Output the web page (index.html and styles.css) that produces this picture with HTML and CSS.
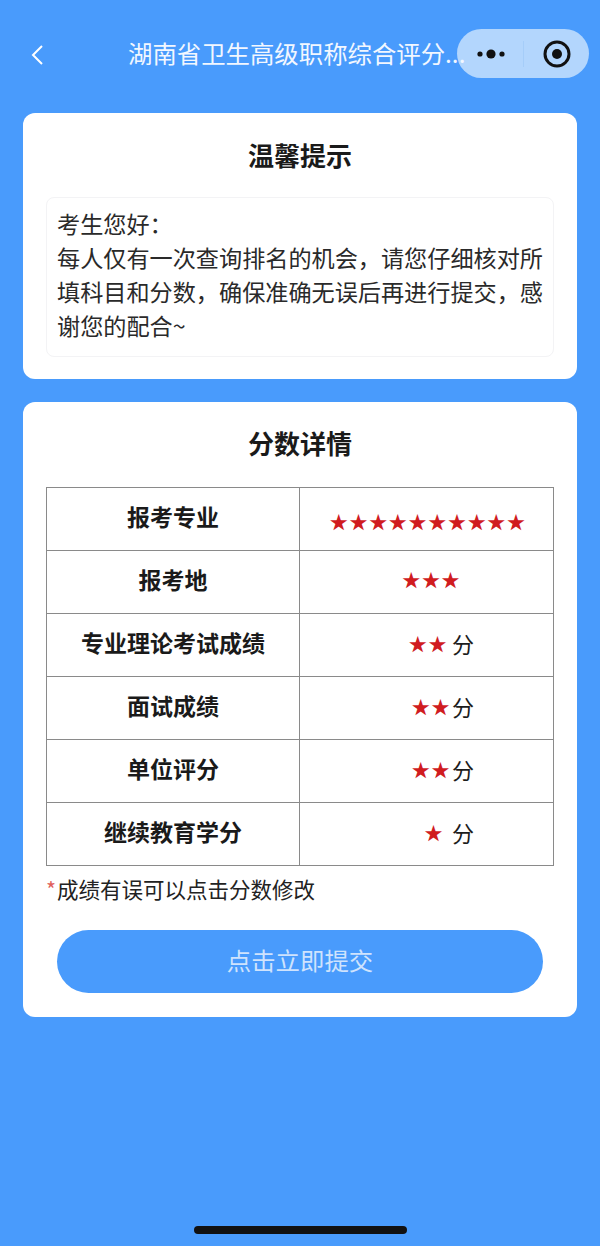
FILE: index.html
```html
<!DOCTYPE html>
<html lang="zh-CN">
<head>
    <meta charset="UTF-8">
    <title>分数详情</title>
    <link rel="stylesheet" href="styles.css">
</head>
<body>
    <header class="topbar">
        <svg class="back" width="14" height="22" viewBox="0 0 14 22">
            <path d="M12 2 L3 11 L12 20" fill="none" stroke="#fff" stroke-width="2"/>
        </svg>
        <div class="capsule">
            <svg class="dots" width="30" height="12" viewBox="0 0 30 12">
                <circle cx="4" cy="6" r="2.6" fill="#111"/>
                <circle cx="15" cy="6" r="4.6" fill="#111"/>
                <circle cx="26" cy="6" r="2.6" fill="#111"/>
            </svg>
            <span class="divider"></span>
            <svg class="target" width="28" height="28" viewBox="0 0 28 28">
                <circle cx="14" cy="14" r="12" fill="none" stroke="#111" stroke-width="3"/>
                <circle cx="14" cy="14" r="5" fill="#111"/>
            </svg>
        </div>
        <div class="title">湖南省卫生高级职称综合评分...</div>
    </header>

    <main class="content">
        <section class="card notice-card">
            <h2>温馨提示</h2>
            <div class="notice">
                考生您好&#xFF1A;<br>
                每人仅有一次查询排名的机会&#xFF0C;请您仔细核对所填科目和分数&#xFF0C;确保准确无误后再进行提交&#xFF0C;感谢您的配合~
            </div>
        </section>

        <section class="card score-card">
            <h2>分数详情</h2>
            <table class="scores">
                <tr>
                    <th>报考专业</th>
                    <td class="low"><span class="stars shift">★★★★★★★★★★</span></td>
                </tr>
                <tr>
                    <th>报考地</th>
                    <td class="mid"><span class="stars shift-far">★★★</span></td>
                </tr>
                <tr>
                    <th>专业理论考试成绩</th>
                    <td><div class="score"><span class="stars gap-m">★★</span>分</div></td>
                </tr>
                <tr>
                    <th>面试成绩</th>
                    <td><div class="score"><span class="stars gap-s">★★</span>分</div></td>
                </tr>
                <tr>
                    <th>单位评分</th>
                    <td><div class="score"><span class="stars gap-s">★★</span>分</div></td>
                </tr>
                <tr>
                    <th>继续教育学分</th>
                    <td><div class="score"><span class="stars gap-l">★</span>分</div></td>
                </tr>
            </table>
            <p class="tip"><span class="mark">*</span>成绩有误可以点击分数修改</p>
            <button class="submit" type="button">点击立即提交</button>
        </section>
    </main>

    <div class="home-bar"></div>
</body>
</html>
```

FILE: styles.css
```css
html, body {
    height: 100%;
}
body {
    margin: 0;
    display: flex;
    flex-direction: column;
    background-color: #499bfc;
    font-family: "Noto Sans CJK SC", "Noto Sans", sans-serif;
    color: #1c1c1c;
    overflow: hidden;
}
.topbar {
    position: relative;
    height: 113px;
    flex-shrink: 0;
}
.back {
    position: absolute;
    left: 30px;
    top: 44px;
}
.title {
    position: absolute;
    left: 128px;
    top: 34px;
    color: #f2f7ff;
    font-size: 24.4px;
    line-height: 38px;
    white-space: nowrap;
}
.capsule {
    position: absolute;
    left: 457px;
    top: 29px;
    width: 132px;
    height: 49px;
    border-radius: 25px;
    background-color: #b3d6fd;
    display: flex;
    align-items: center;
}
.dots {
    margin-left: 19px;
}
.divider {
    width: 1px;
    height: 26px;
    margin-left: 17px;
    background-color: #a5cdf9;
}
.target {
    margin-left: 19px;
}
.content {
    display: flex;
    flex-direction: column;
    gap: 23px;
    padding: 0 23px;
}
.card {
    background-color: #fff;
    border-radius: 12px;
    padding: 0 23px;
}
.card h2 {
    margin: 0;
    text-align: center;
    font-size: 26px;
    font-weight: 700;
    line-height: 38px;
    color: #1a1a1a;
}
.notice-card {
    height: 266px;
    padding-top: 23px;
    box-sizing: border-box;
}
.notice {
    margin-top: 23px;
    padding: 8px 8px 14px 10px;
    border: 1px solid #f3f3f5;
    border-radius: 8px;
    font-size: 23.15px;
    line-height: 34px;
    color: #2a2a2a;
}
.score-card {
    height: 615px;
    padding-top: 22px;
    box-sizing: border-box;
}
.scores {
    width: 508px;
    margin-top: 25px;
    border-collapse: collapse;
    table-layout: fixed;
}
.scores th,
.scores td {
    box-sizing: border-box;
    height: 63px;
    padding: 0;
    border: 1px solid #8a8a8a;
    font-size: 23px;
    text-align: center;
    vertical-align: middle;
}
.scores th {
    width: 253px;
    padding-bottom: 7px;
    font-weight: 700;
    color: #1a1a1a;
}
.scores td {
    padding-bottom: 5px;
    font-size: 22px;
}
.scores td.low {
    padding: 0 0 1px;
}
.scores td.mid {
    padding-bottom: 11px;
}
.stars {
    font-size: 18.5px;
    letter-spacing: 1.2px;
    color: #d01c1f;
}
.shift {
    margin-left: 3px;
}
.shift-far {
    margin-left: 10px;
}
.score {
    display: flex;
    justify-content: flex-end;
    align-items: center;
    padding-right: 79px;
}
.gap-m {
    margin-right: 4px;
}
.gap-s {
    margin-right: 1px;
}
.gap-l {
    margin-right: 8px;
}
.tip {
    margin: 7px 0 0;
    font-size: 21.5px;
    line-height: 32px;
    color: #222;
}
.mark {
    margin-right: 1px;
    color: #e0605c;
}
.submit {
    display: block;
    width: 486px;
    height: 63px;
    margin: 25px 0 0 11px;
    padding: 0 0 4px;
    border: 0;
    border-radius: 32px;
    background-color: #499bfc;
    color: #cfe3fd;
    font-family: inherit;
    font-size: 24.4px;
}
.home-bar {
    width: 213px;
    height: 8px;
    margin: auto auto 12px;
    border-radius: 4px;
    background-color: #111;
}
```
